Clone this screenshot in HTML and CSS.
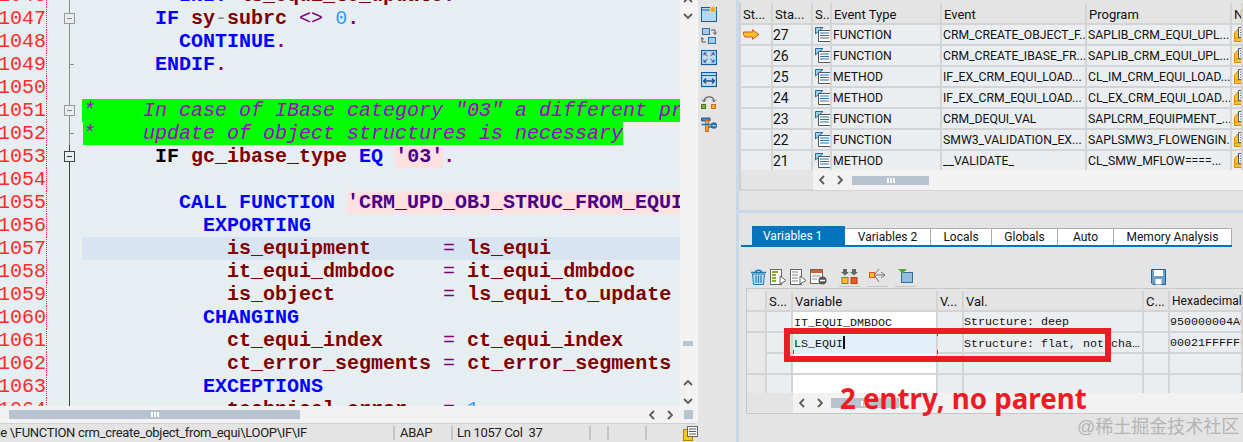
FILE: index.html
```html
<!DOCTYPE html>
<html lang="en">
<head>
    <meta charset="UTF-8">
    <title>ABAP Debugger</title>
    <link rel="stylesheet" href="styles.css">
</head>
<body>
    <svg class="defs" width="0" height="0">
        <symbol id="chev-up" viewBox="0 0 10 6"><path d="M1 5 L5 1 L9 5" fill="none" stroke="#5c5c5c" stroke-width="1.8"/></symbol>
        <symbol id="chev-down" viewBox="0 0 10 6"><path d="M1 1 L5 5 L9 1" fill="none" stroke="#5c5c5c" stroke-width="1.8"/></symbol>
        <symbol id="chev-left" viewBox="0 0 6 10"><path d="M5 1 L1 5 L5 9" fill="none" stroke="#5c5c5c" stroke-width="1.8"/></symbol>
        <symbol id="chev-right" viewBox="0 0 6 10"><path d="M1 1 L5 5 L1 9" fill="none" stroke="#5c5c5c" stroke-width="1.8"/></symbol>
        <symbol id="doc" viewBox="0 0 16 15">
            <path d="M0.5 0.5 H8 L0.5 7 Z" fill="#9fd0ea" stroke="#1a6fa8"/>
            <path d="M3.5 3.5 H15.5 V14.5 H3.5 Z" fill="#fff" stroke="#555"/>
            <path d="M5 6 H14 M5 8.5 H14 M5 11 H14" stroke="#2a6fb0" stroke-width="1.2"/>
        </symbol>
        <symbol id="doc-orange" viewBox="0 0 16 15">
            <path d="M0.5 14.5 V6 L5 1 V14.5 Z" fill="#fbc02d" stroke="#e08a00"/>
            <path d="M0.5 14.5 H12 V11 H0.5 Z" fill="#fbc02d" stroke="#e08a00"/>
            <path d="M4.5 0.5 H15.5 V10.5 H4.5 Z" fill="#fff" stroke="#555"/>
            <path d="M6 3 H14 M6 5.5 H14 M6 8 H14" stroke="#2a6fb0" stroke-width="1.2"/>
        </symbol>
    </svg>

    <div class="app">
        <div class="left-pane">
            <div class="editor-row">
                <div class="editor">
                    <div class="code-lines">
                        <div class="line"><span class="num">1046</span><span class="fold"></span><span class="code">        <span class="k">INIT</span> <span class="v">ls_equi_to_update</span><span class="p">.</span></span></div>
                        <div class="line"><span class="num">1047</span><span class="fold"><i class="fold-box"></i></span><span class="code">      <span class="k">IF</span> <span class="v">sy<span class="dash">-</span>subrc</span> <span class="op">&lt;&gt;</span> <span class="n">0</span><span class="p">.</span></span></div>
                        <div class="line"><span class="num">1048</span><span class="fold"></span><span class="code">        <span class="k">CONTINUE</span><span class="p">.</span></span></div>
                        <div class="line"><span class="num">1049</span><span class="fold tick"></span><span class="code">      <span class="k">ENDIF</span><span class="p">.</span></span></div>
                        <div class="line"><span class="num">1050</span><span class="fold"></span><span class="code"></span></div>
                        <div class="line"><span class="num">1051</span><span class="fold"><i class="fold-box"></i></span><span class="code comment">*    In case of IBase category "03" a different process</span></div>
                        <div class="line"><span class="num">1052</span><span class="fold tick"></span><span class="code"><span class="comment">*    update of object structures is necessary</span></span></div>
                        <div class="line"><span class="num">1053</span><span class="fold dark"><i class="fold-box active"></i></span><span class="code">      <span class="k match">IF</span> <span class="v">gc_ibase_type</span> <span class="k">EQ</span> <span class="s">'03'</span><span class="p">.</span></span></div>
                        <div class="line"><span class="num">1054</span><span class="fold dark"></span><span class="code"></span></div>
                        <div class="line"><span class="num">1055</span><span class="fold dark"></span><span class="code">        <span class="k">CALL FUNCTION</span> <span class="s">'CRM_UPD_OBJ_STRUC_FROM_EQUI'</span></span></div>
                        <div class="line"><span class="num">1056</span><span class="fold dark"></span><span class="code">          <span class="k">EXPORTING</span></span></div>
                        <div class="line"><span class="num">1057</span><span class="fold dark"></span><span class="code current">            <span class="v">is_equipment</span>      <span class="eq">=</span> <span class="v">ls_equi</span></span></div>
                        <div class="line"><span class="num">1058</span><span class="fold dark"></span><span class="code">            <span class="v">it_equi_dmbdoc</span>    <span class="eq">=</span> <span class="v">it_equi_dmbdoc</span></span></div>
                        <div class="line"><span class="num">1059</span><span class="fold dark"></span><span class="code">            <span class="v">is_object</span>         <span class="eq">=</span> <span class="v">ls_equi_to_update</span></span></div>
                        <div class="line"><span class="num">1060</span><span class="fold dark"></span><span class="code">          <span class="k">CHANGING</span></span></div>
                        <div class="line"><span class="num">1061</span><span class="fold dark"></span><span class="code">            <span class="v">ct_equi_index</span>     <span class="eq">=</span> <span class="v">ct_equi_index</span></span></div>
                        <div class="line"><span class="num">1062</span><span class="fold dark"></span><span class="code">            <span class="v">ct_error_segments</span> <span class="eq">=</span> <span class="v">ct_error_segments</span></span></div>
                        <div class="line"><span class="num">1063</span><span class="fold dark"></span><span class="code">          <span class="k">EXCEPTIONS</span></span></div>
                        <div class="line"><span class="num">1064</span><span class="fold dark"></span><span class="code">            <span class="v">technical_error</span>   <span class="eq">=</span> <span class="n">1</span></span></div>
                    </div>
                </div>
                <div class="vscroll">
                    <svg class="chev-v first"><use href="#chev-up"/></svg>
                    <svg class="chev-v"><use href="#chev-down"/></svg>
                    <div class="vthumb"></div>
                    <svg class="chev-v lower"><use href="#chev-up"/></svg>
                    <svg class="chev-v"><use href="#chev-down"/></svg>
                </div>
            </div>
            <div class="hscroll">
                <div class="hthumb"><i></i><i></i><i></i></div>
                <svg class="chev-h"><use href="#chev-left"/></svg>
                <svg class="chev-h"><use href="#chev-right"/></svg>
                <div class="hscroll-end"></div>
            </div>
            <div class="statusbar">
                <div class="status-path">Node \FUNCTION crm_create_object_from_equi\LOOP\IF\IF</div>
                <div class="status-lang">ABAP</div>
                <div class="status-pos">Ln 1057 Col&nbsp; 37</div>
                <div class="status-a"></div>
                <div class="status-b"></div>
                <div class="status-c"></div>
                <svg class="status-icon" width="15" height="15" viewBox="0 0 15 15">
                    <rect x="0.5" y="3.5" width="9" height="11" fill="#f8c52c" stroke="#b57f00"/>
                    <rect x="4.5" y="0.5" width="10" height="10" fill="#fff" stroke="#666"/>
                    <path d="M6 3 H13 M6 5.5 H13 M6 8 H13" stroke="#555"/>
                </svg>
            </div>
        </div>

        <div class="tool-strip">
            <svg width="16" height="16" viewBox="0 0 16 16">
                <rect x="0.5" y="1.5" width="15" height="14" fill="#b9d6ec" stroke="#0f5f9a"/>
                <path d="M1 4 H15" stroke="#0f5f9a"/>
                <circle cx="12" cy="3.5" r="3" fill="#f7a823" stroke="#fbe08a"/>
            </svg>
            <svg width="16" height="16" viewBox="0 0 16 16">
                <rect x="1.5" y="0.5" width="7" height="6" fill="#a9c9e4" stroke="#2a6fa8"/>
                <rect x="7.5" y="9.5" width="7" height="6" fill="#a9c9e4" stroke="#2a6fa8"/>
                <path d="M10 2 H14 V6 M12.500 4.500 L14 6.500 L15.500 4.500 M5 14 H1 V10 M-0.500 11.500 L1 9.500 L2.500 11.500" fill="none" stroke="#555"/>
            </svg>
            <svg width="16" height="16" viewBox="0 0 16 16">
                <rect x="0.5" y="0.5" width="15" height="14" fill="#c3dcef" stroke="#0f5f9a" stroke-width="1.2"/>
                <path d="M3 3 L6.500 6 M13 3 L9.500 6 M3 12 L6.500 9 M13 12 L9.500 9 M3 5.500 V3 H5.500 M13 5.500 V3 H10.500 M3 9.500 V12 H5.500 M13 9.500 V12 H10.500" fill="none" stroke="#1a4f9c"/>
            </svg>
            <svg width="16" height="16" viewBox="0 0 16 16">
                <rect x="0.5" y="0.5" width="15" height="14" fill="#c3dcef" stroke="#0f5f9a" stroke-width="1.2"/>
                <path d="M1 3.500 H15" stroke="#0f5f9a"/>
                <path d="M2.500 9 H13.500 M5 6.500 L2.500 9 L5 11.500 M11 6.500 L13.500 9 L11 11.500" fill="none" stroke="#1a4f9c" stroke-width="1.3"/>
            </svg>
            <svg width="16" height="16" viewBox="0 0 16 16">
                <path d="M3 7 C3 1.500 13 1.500 13 7" fill="none" stroke="#666" stroke-width="1.2"/>
                <path d="M1 5.500 L3 8 L5 5.500 M11 5.500 L13 8 L15 5.500" fill="none" stroke="#666"/>
                <rect x="0.500" y="10.500" width="4" height="4" fill="#7fae3a" stroke="#4f7a1e"/>
                <rect x="10.500" y="10.500" width="4" height="4" fill="#f9b233" stroke="#d9661f"/>
            </svg>
            <svg width="16" height="16" viewBox="0 0 16 16">
                <path d="M0.500 2 H9 V5 H0.500 Z" fill="#4c86b8" stroke="#2a5a88"/>
                <rect x="4.500" y="4.500" width="3" height="11" fill="#f9a825" stroke="#d9661f"/>
                <path d="M0.500 8.500 H15 M8 11 H14" stroke="#2a6fa8" stroke-width="1.6"/>
                <circle cx="13" cy="9.500" r="2.500" fill="none" stroke="#2a6fa8" stroke-width="1.4"/>
            </svg>
        </div>

        <div class="splitter"></div>

        <div class="right-pane">
            <div class="stack-table">
                <div class="stack-row stack-head">
                    <div class="cell">St...</div><div class="cell">Sta...</div><div class="cell">S...</div><div class="cell">Event Type</div><div class="cell">Event</div><div class="cell">Program</div><div class="cell">N</div>
                </div>
                <div class="stack-row">
                    <div class="cell icon-cell"><svg width="17" height="11" viewBox="0 0 17 11"><path d="M0.500 3 H9.500 V0.700 L16 5.500 L9.500 10.300 V8 H2 L0.500 5.500 Z" fill="#fbc02d" stroke="#d9541e"/></svg></div>
                    <div class="cell num-cell">27</div><div class="cell icon-cell"><svg class="doc"><use href="#doc"/></svg></div><div class="cell">FUNCTION</div><div class="cell">CRM_CREATE_OBJECT_F...</div><div class="cell">SAPLIB_CRM_EQUI_UPL...</div><div class="cell icon-cell"><svg class="doc"><use href="#doc-orange"/></svg></div>
                </div>
                <div class="stack-row">
                    <div class="cell"></div>
                    <div class="cell num-cell">26</div><div class="cell icon-cell"><svg class="doc"><use href="#doc"/></svg></div><div class="cell">FUNCTION</div><div class="cell">CRM_CREATE_IBASE_FR...</div><div class="cell">SAPLIB_CRM_EQUI_UPL...</div><div class="cell icon-cell"><svg class="doc"><use href="#doc-orange"/></svg></div>
                </div>
                <div class="stack-row">
                    <div class="cell"></div>
                    <div class="cell num-cell">25</div><div class="cell icon-cell"><svg class="doc"><use href="#doc"/></svg></div><div class="cell">METHOD</div><div class="cell">IF_EX_CRM_EQUI_LOAD...</div><div class="cell">CL_IM_CRM_EQUI_LOAD...</div><div class="cell icon-cell"><svg class="doc"><use href="#doc-orange"/></svg></div>
                </div>
                <div class="stack-row">
                    <div class="cell"></div>
                    <div class="cell num-cell">24</div><div class="cell icon-cell"><svg class="doc"><use href="#doc"/></svg></div><div class="cell">METHOD</div><div class="cell">IF_EX_CRM_EQUI_LOAD...</div><div class="cell">CL_EX_CRM_EQUI_LOAD...</div><div class="cell icon-cell"><svg class="doc"><use href="#doc-orange"/></svg></div>
                </div>
                <div class="stack-row">
                    <div class="cell"></div>
                    <div class="cell num-cell">23</div><div class="cell icon-cell"><svg class="doc"><use href="#doc"/></svg></div><div class="cell">FUNCTION</div><div class="cell">CRM_DEQUI_VAL</div><div class="cell">SAPLCRM_EQUIPMENT_...</div><div class="cell icon-cell"><svg class="doc"><use href="#doc-orange"/></svg></div>
                </div>
                <div class="stack-row">
                    <div class="cell"></div>
                    <div class="cell num-cell">22</div><div class="cell icon-cell"><svg class="doc"><use href="#doc"/></svg></div><div class="cell">FUNCTION</div><div class="cell">SMW3_VALIDATION_EX...</div><div class="cell">SAPLSMW3_FLOWENGIN...</div><div class="cell icon-cell"><svg class="doc"><use href="#doc-orange"/></svg></div>
                </div>
                <div class="stack-row last">
                    <div class="cell"></div>
                    <div class="cell num-cell">21</div><div class="cell icon-cell"><svg class="doc"><use href="#doc"/></svg></div><div class="cell">METHOD</div><div class="cell">__VALIDATE_</div><div class="cell">CL_SMW_MFLOW====...</div><div class="cell icon-cell"><svg class="doc"><use href="#doc-orange"/></svg></div>
                </div>
                <div class="stack-scroll">
                    <div class="scroll-btn"><svg class="chev-h"><use href="#chev-left"/></svg></div>
                    <div class="scroll-btn"><svg class="chev-h"><use href="#chev-right"/></svg></div>
                    <div class="stack-thumb"><i></i><i></i><i></i></div>
                </div>
            </div>

            <div class="h-splitter"></div>

            <div class="tabs">
                <div class="tab tab-active">Variables 1</div>
                <div class="tab t2">Variables 2</div>
                <div class="tab t3">Locals</div>
                <div class="tab t4">Globals</div>
                <div class="tab t5">Auto</div>
                <div class="tab t6">Memory Analysis</div>
            </div>

            <div class="var-toolbar">
                <svg width="17" height="16" viewBox="0 0 17 16">
                    <path d="M1 3.500 H16 M5.500 3 C6 0.500 11 0.500 11.500 3" fill="none" stroke="#1a7ab8" stroke-width="1.5"/>
                    <path d="M2.500 5 H14.500 L13.500 15.500 H3.500 Z" fill="#bfe0f2" stroke="#1a7ab8"/>
                    <path d="M6 6.500 V14 M8.500 6.500 V14 M11 6.500 V14" stroke="#1a7ab8" stroke-width="1.2"/>
                </svg>
                <svg width="17" height="16" viewBox="0 0 17 16">
                    <rect x="0.500" y="0.500" width="11" height="15" fill="#fff" stroke="#666"/>
                    <path d="M2 3 H8 M2 6 H6 M2 9 H6 M2 12 H6" stroke="#7fb020" stroke-width="2"/>
                    <path d="M10 7 L16 11.500 L10 15 Z" fill="#fff" stroke="#666"/>
                </svg>
                <svg width="17" height="16" viewBox="0 0 17 16">
                    <rect x="0.500" y="0.500" width="11" height="15" fill="#fff" stroke="#666"/>
                    <path d="M2 3 H8 M2 6 H8 M2 9 H8 M2 12 H8" stroke="#aaa" stroke-width="1.500"/>
                    <path d="M10 7 L16 11.500 L10 15 Z" fill="#fff" stroke="#666"/>
                </svg>
                <svg width="17" height="16" viewBox="0 0 17 16">
                    <rect x="0.500" y="0.500" width="12" height="14" fill="#fff" stroke="#666"/>
                    <rect x="1" y="1" width="11" height="3" fill="#d9602a"/>
                    <path d="M2 7 H10 M2 10 H7" stroke="#888"/>
                    <circle cx="12.500" cy="11.500" r="4" fill="#555"/>
                    <path d="M10 11.500 H15" stroke="#fff" stroke-width="1.500"/>
                </svg>
                <div class="tool-group g1">
                    <svg width="17" height="16" viewBox="0 0 17 16">
                        <path d="M2 1 H6 V4 H8 L4 7.500 L0 4 H2 Z M11 1 H15 V4 H17 L13 7.500 L9 4 H11 Z" fill="#666"/>
                        <rect x="1" y="9.500" width="6" height="6" fill="#fbc02d" stroke="#d9541e"/>
                        <rect x="10" y="9.500" width="6" height="6" fill="#e0601e" stroke="#b5400e"/>
                    </svg>
                </div>
                <div class="tool-group g2">
                    <svg width="17" height="16" viewBox="0 0 17 16">
                        <rect x="0.500" y="4.500" width="5" height="5" fill="#fbc02d" stroke="#d9541e"/>
                        <path d="M6 7 H16 M12 4 L16 7 L12 10 M6 6 L10 1 M6 8 L10 14" fill="none" stroke="#777"/>
                    </svg>
                </div>
                <div class="tool-group g3">
                    <svg width="17" height="16" viewBox="0 0 17 16">
                        <rect x="4.500" y="4.500" width="11" height="10" fill="#94bcdd" stroke="#2a6fa8"/>
                        <path d="M1 1 H10 L5.500 5.500 Z" fill="#55a630"/>
                    </svg>
                </div>
                <svg class="save" width="15" height="16" viewBox="0 0 15 16">
                    <path d="M0.500 0.500 H14.500 V15.500 H2 L0.500 14 Z" fill="#6f9fc8" stroke="#1a5f96"/>
                    <rect x="3" y="1" width="9" height="6" fill="#fff"/>
                    <rect x="4.500" y="10" width="6" height="5.500" fill="#fff"/>
                </svg>
            </div>

            <div class="var-table">
                <div class="var-row var-head">
                    <div class="cell corner"></div><div class="cell">S...</div><div class="cell">Variable</div><div class="cell">V...</div><div class="cell">Val.</div><div class="cell">C...</div><div class="cell hex">Hexadecimal</div>
                </div>
                <div class="var-row">
                    <div class="cell corner"></div><div class="cell"></div><div class="cell name"><span class="name-clip">IT_EQUI_DMBDOC</span></div><div class="cell"></div><div class="cell mono">Structure: deep</div><div class="cell"></div><div class="cell mono">950000004A0000000000</div>
                </div>
                <div class="var-row">
                    <div class="cell corner"></div><div class="cell"></div><div class="cell name editing">LS_EQUI<b class="caret"></b><i class="mark mark-tr"></i><i class="mark mark-br"></i><i class="mark mark-bl"></i></div><div class="cell"></div><div class="cell mono">Structure: flat, not cha<span class="dots">...</span></div><div class="cell"></div><div class="cell mono">00021FFFFFFF00000000</div>
                </div>
                <div class="var-row">
                    <div class="cell corner"></div><div class="cell"></div><div class="cell name"></div><div class="cell"></div><div class="cell"></div><div class="cell"></div><div class="cell"></div>
                </div>
                <div class="var-row last">
                    <div class="cell corner"></div><div class="cell"></div><div class="cell name"></div><div class="cell"></div><div class="cell"></div><div class="cell"></div><div class="cell"></div>
                </div>
                <div class="var-scroll">
                    <div class="scroll-btn"><svg class="chev-h"><use href="#chev-left"/></svg></div>
                    <div class="scroll-btn"><svg class="chev-h"><use href="#chev-right"/></svg></div>
                    <div class="var-thumb"><i></i><i></i><i></i></div>
                </div>
            </div>
        </div>
    </div>

    <div class="red-box"></div>
    <div class="red-note">2 entry, no parent</div>
    <div class="watermark">@稀土掘金技术社区</div>
</body>
</html>
```

FILE: styles.css
```css
html, body {
    margin: 0;
    padding: 0;
    height: 442px;
    overflow: hidden;
    background-color: #e4e4e4;
}
body {
    position: relative;
    font-family: Roboto, "Liberation Sans", sans-serif;
    font-size: 12px;
    color: #111;
}
.defs {
    display: block;
    height: 0;
}
.app {
    display: flex;
    height: 442px;
}

/* left side: code editor */
.left-pane {
    width: 698px;
    flex: none;
    display: flex;
    flex-direction: column;
}
.editor-row {
    display: flex;
    height: 406px;
    border-right: 2px solid #f4f4f4;
    box-sizing: border-box;
}
.editor {
    width: 680px;
    flex: none;
    overflow: hidden;
    background-color: #e7eef1;
}
.code-lines {
    margin-top: -16px;
}
.line {
    display: flex;
    height: 23px;
    font-family: "Liberation Mono", monospace;
    font-size: 20px;
    line-height: 23px;
    white-space: pre;
}
.num {
    width: 47px;
    flex: none;
    box-sizing: border-box;
    border-right: 1px dotted #e03030;
    color: #ff2a2a;
    overflow: hidden;
    text-indent: -2px;
}
.fold {
    width: 35px;
    flex: none;
    display: flex;
    align-items: center;
    background: linear-gradient(#8a8a8a, #8a8a8a) 22px 0 / 1px 100% no-repeat;
}
.fold.dark {
    background-image: linear-gradient(#444, #444);
}
.fold.tick {
    background-image: linear-gradient(#8a8a8a, #8a8a8a), linear-gradient(#8a8a8a, #8a8a8a);
    background-position: 22px 0, 22px 11px;
    background-size: 1px 100%, 5px 1px;
}
.fold-box {
    width: 9px;
    height: 9px;
    margin-left: 17px;
    border: 1px solid #999;
    background: linear-gradient(#888, #888) center / 5px 1px no-repeat #e7eef1;
}
.fold-box.active {
    border-color: #444;
    background-image: linear-gradient(#333, #333);
}
.code {
    flex: 1;
    min-width: 0;
    overflow: hidden;
    padding-left: 1px;
    font-weight: bold;
}
.current {
    background-color: #d9e4f2;
}
.k { color: #0000ff; }
.k.match { color: #000; }
.v { color: #800000; }
.dash { color: #888; font-weight: normal; }
.p { color: #800080; }
.op, .eq { color: #800080; font-weight: normal; }
.n { color: #3399ff; font-weight: normal; }
.s {
    display: inline-block;
    height: 23px;
    color: #4b0082;
    background-color: #ffe0e0;
}
.comment {
    display: inline-block;
    height: 23px;
    color: #a000c8;
    background-color: #00ff00;
    font-style: italic;
    font-weight: normal;
}
.code.comment {
    display: block;
    padding-left: 1px;
}

.vscroll {
    flex: 1;
    background-color: #f2f2f2;
    display: flex;
    flex-direction: column;
    align-items: center;
}
.chev-v {
    width: 10px;
    height: 6px;
    flex: none;
}
.chev-v.first {
    margin-top: -3px;
    margin-bottom: 10px;
}
.vthumb {
    width: 10px;
    height: 5px;
    margin-top: 322px;
    background-color: #b8c4d0;
}
.chev-v.lower {
    margin-top: 34px;
    margin-bottom: 12px;
}
.hscroll {
    height: 18px;
    box-sizing: border-box;
    border-right: 2px solid #f4f4f4;
    border-bottom: 1px solid #cfcfcf;
    background-color: #f2f2f2;
    display: flex;
    align-items: center;
}
.hthumb {
    width: 291px;
    height: 9px;
    margin-left: 9px;
    margin-right: 349px;
    background-color: #b7c3cf;
    display: flex;
    align-items: center;
    justify-content: center;
    gap: 1px;
}
.hthumb i, .stack-thumb i, .var-thumb i {
    width: 2px;
    height: 5px;
    background-color: #fff;
}
.chev-h {
    width: 6px;
    height: 10px;
    flex: none;
    margin-right: 12px;
}
.hscroll-end {
    width: 9px;
    height: 9px;
    margin-left: -1px;
    background-color: #b7c3cf;
}
.statusbar {
    flex: 1;
    display: flex;
    align-items: center;
    overflow: hidden;
    font-size: 13px;
    letter-spacing: -0.3px;
    color: #222;
}
.statusbar > div {
    height: 14px;
    line-height: 14px;
    box-sizing: border-box;
    white-space: nowrap;
    flex: none;
}
.status-path {
    width: 393px;
    padding-right: 86px;
    display: flex;
    justify-content: flex-end;
    overflow: hidden;
}
.status-lang {
    width: 58px;
    border-left: 2px solid #c4c4c4;
    padding-left: 5px;
}
.status-pos {
    width: 138px;
    border-left: 2px solid #c4c4c4;
    padding-left: 4px;
}
.status-a { width: 18px; border-left: 2px solid #c4c4c4; }
.status-b { width: 38px; border-left: 2px solid #c4c4c4; }
.status-c { width: 38px; border-left: 2px solid #c4c4c4; }
.status-icon {
    flex: none;
}

/* toolbar between editor and debugger */
.tool-strip {
    width: 38px;
    flex: none;
    box-sizing: border-box;
    padding-top: 6px;
    padding-left: 3px;
    display: flex;
    flex-direction: column;
    gap: 6px;
}
.splitter {
    width: 3px;
    flex: none;
    background-color: #c9d9e9;
}

/* right side: debugger */
.right-pane {
    flex: 1;
    min-width: 0;
    overflow: hidden;
}
.cell {
    overflow: hidden;
    white-space: nowrap;
    box-sizing: border-box;
    border-right: 2px solid #d4d4d4;
    padding-left: 1px;
}
.stack-table {
    margin-top: 3px;
    border-left: 2px solid #cfcfcf;
    border-bottom: 2px solid #d4d4d4;
    height: 188px;
    box-sizing: border-box;
}
.stack-row {
    display: grid;
    grid-template-columns: 32px 40px 19px 110px 145px 145px 1fr;
    height: 21px;
    line-height: 21px;
    box-sizing: border-box;
    border-bottom: 2px solid #d4d4d4;
    background-color: #eaeef1;
    font-size: 12.2px;
}
.stack-row.last {
    height: 19px;
    border-bottom: 0;
}
.stack-head {
    height: 22px;
    line-height: 23px;
    background-color: #e4e4e4;
    font-size: 13px;
}
.stack-head .cell {
    padding-left: 2px;
}
.icon-cell {
    display: flex;
    align-items: center;
    padding-left: 2px;
}
.num-cell {
    font-size: 14px;
    padding-left: 0;
}
.doc {
    width: 16px;
    height: 15px;
    flex: none;
}
.stack-scroll {
    display: flex;
    align-items: center;
    height: 20px;
    margin-left: 72px;
    background-color: #f2f2f2;
}
.scroll-btn {
    width: 18px;
    height: 100%;
    display: flex;
    align-items: center;
    justify-content: center;
}
.scroll-btn .chev-h {
    margin: 0;
}
.stack-thumb {
    width: 77px;
    height: 9px;
    margin-left: 3px;
    background-color: #b7c3cf;
    display: flex;
    align-items: center;
    justify-content: center;
    gap: 1px;
}
.h-splitter {
    height: 3px;
    margin-top: 19px;
    background-color: #c9d9e9;
}
.tabs {
    display: flex;
    align-items: flex-end;
    height: 21px;
    margin-top: 13px;
    margin-left: 2px;
    margin-right: 11px;
    padding-left: 11px;
    box-sizing: border-box;
    border-bottom: 2px solid #0074bd;
}
.tab {
    height: 17px;
    line-height: 17px;
    text-align: center;
    box-sizing: border-box;
    background-color: #fff;
    border-top: 1px solid #aaa;
    border-right: 1px solid #aaa;
}
.tab-active {
    width: 93px;
    height: 19px;
    padding-left: 11px;
    background-color: #0074bd;
    color: #fff;
    border: 0;
    line-height: 20px;
    text-align: left;
}
.t2 { width: 86px; }
.t3 { width: 61px; }
.t4 { width: 66px; }
.t5 { width: 56px; }
.t6 { width: 118px; }
.var-toolbar {
    display: flex;
    align-items: center;
    height: 22px;
    margin-top: 19px;
    padding-left: 11px;
    gap: 3px;
}
.tool-group {
    border-bottom: 1px solid #c4c4c4;
    height: 20px;
    width: 21px;
    display: flex;
    justify-content: center;
    align-items: flex-start;
    padding-top: 1px;
    box-sizing: border-box;
}
.g1 { margin-left: 9px; }
.g2 { margin-left: 4px; }
.g3 { margin-left: 4px; }
.save {
    margin-left: 232px;
}
.var-table {
    margin-left: 7px;
    height: 126px;
    box-sizing: border-box;
    border: 1px solid #c8c8c8;
    border-right: 0;
    padding-top: 2px;
}
.var-row {
    display: grid;
    grid-template-columns: 20px 26px 145px 26px 180px 26px 1fr;
    height: 21px;
    line-height: 19px;
    box-sizing: border-box;
    border-bottom: 2px solid #d4d4d4;
    background-color: #eaeef1;
}
.var-row.last {
    height: 18px;
    border-bottom: 0;
}
.var-head {
    line-height: 21px;
    background-color: #e4e4e4;
    font-size: 13px;
}
.var-head .cell {
    padding-left: 2px;
}
.var-head .hex {
    font-size: 12px;
}
.var-row .corner {
    background-color: #e8e8e8;
}
.var-row .name {
    background-color: #fff;
}
.mono {
    font-family: "Liberation Mono", monospace;
    font-size: 11.67px;
    line-height: 20px;
    padding-left: 0;
}
.dots {
    font-family: Roboto, sans-serif;
    letter-spacing: -0.5px;
}
.name {
    font-family: "Liberation Mono", monospace;
    font-size: 11.67px;
    line-height: 22px;
    position: relative;
}
.name-clip {
    display: inline-block;
    height: 12px;
    line-height: 14px;
    margin-top: 4px;
    overflow: hidden;
    vertical-align: top;
}
.var-row .editing {
    background-color: #e3eff8;
    overflow: visible;
}
.caret {
    display: inline-block;
    width: 2px;
    height: 13px;
    vertical-align: -2px;
    background-color: #111;
}
.mark {
    position: absolute;
    width: 5px;
    height: 5px;
    border: 0 solid #e0282e;
}
.mark-tr { right: -2px; top: 0; border-right-width: 1px; height: 3px; width: 0; }
.mark-br { right: -2px; bottom: -1px; border-right-width: 1px; border-bottom-width: 1px; }
.mark-bl { left: 0; bottom: -1px; border-left-width: 1px; border-bottom-width: 1px; }
.var-scroll {
    display: flex;
    align-items: center;
    height: 20px;
    margin-left: 46px;
    background-color: #f2f2f2;
}
.var-thumb {
    width: 68px;
    height: 10px;
    margin-left: 2px;
    background-color: #b7c3cf;
    display: flex;
    align-items: center;
    justify-content: center;
    gap: 1px;
}

/* annotations drawn on top of the screenshot */
.red-box {
    position: absolute;
    left: 784px;
    top: 328px;
    width: 327px;
    height: 34px;
    box-sizing: border-box;
    border: 6px solid #ed1c24;
}
.red-note {
    position: absolute;
    left: 840px;
    top: 379px;
    font-family: "Noto Sans", sans-serif;
    font-size: 27.7px;
    line-height: 38px;
    font-weight: bold;
    color: #ed1c24;
    white-space: nowrap;
}
.watermark {
    position: absolute;
    left: 1077px;
    top: 415px;
    font-family: "Liberation Sans", "Noto Sans CJK SC", sans-serif;
    font-size: 18px;
    line-height: 24px;
    color: #b4b4b4;
    white-space: nowrap;
}
```
